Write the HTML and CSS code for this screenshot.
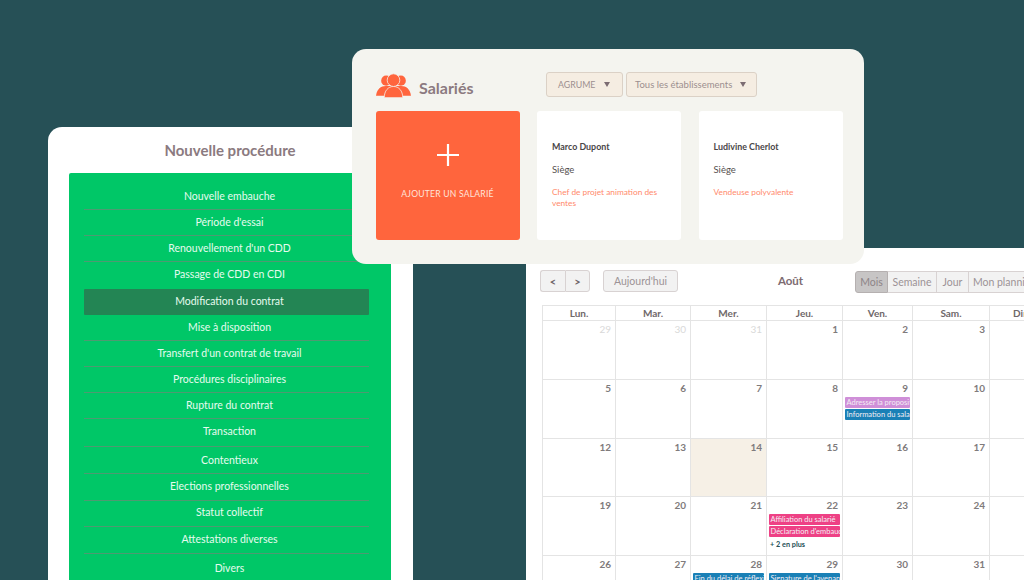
FILE: index.html
```html
<!DOCTYPE html>
<html lang="fr">
<head>
  <meta charset="utf-8" />
  <title>Salariés</title>
  <meta name="viewport" content="width=device-width, initial-scale=1" />
  <link rel="stylesheet" href="styles.css">
</head>
<body>
  <div class="canvas">

    <div class="window procedure">
      <h2 class="procedure-title">Nouvelle procédure</h2>
      <div class="menu">
        <div class="menu-item">Nouvelle embauche</div>
        <div class="menu-item">Période d'essai</div>
        <div class="menu-item">Renouvellement d'un CDD</div>
        <div class="menu-item no-line raised">Passage de CDD en CDI</div>
        <div class="menu-item active raised">Modification du contrat</div>
        <div class="menu-item">Mise à disposition</div>
        <div class="menu-item">Transfert d'un contrat de travail</div>
        <div class="menu-item">Procédures disciplinaires</div>
        <div class="menu-item">Rupture du contrat</div>
        <div class="menu-item raised">Transaction</div>
        <div class="menu-item">Contentieux</div>
        <div class="menu-item raised">Elections professionnelles</div>
        <div class="menu-item raised">Statut collectif</div>
        <div class="menu-item raised">Attestations diverses</div>
        <div class="menu-item no-line raised">Divers</div>
      </div>
    </div>

    <div class="window calendar">
      <div class="cal-toolbar">
        <div class="btn-group">
          <button class="cal-btn arrow">&lt;</button>
          <button class="cal-btn arrow">&gt;</button>
        </div>
        <button class="cal-btn today">Aujourd'hui</button>
        <div class="cal-month">Août</div>
        <div class="btn-group views">
          <button class="cal-btn view selected">Mois</button>
          <button class="cal-btn view">Semaine</button>
          <button class="cal-btn view">Jour</button>
          <button class="cal-btn view planning">Mon planning</button>
        </div>
      </div>
      <div class="cal-grid">
        <div class="cal-head">Lun.</div>
        <div class="cal-head">Mar.</div>
        <div class="cal-head">Mer.</div>
        <div class="cal-head">Jeu.</div>
        <div class="cal-head">Ven.</div>
        <div class="cal-head">Sam.</div>
        <div class="cal-head">Dim.</div>

        <div class="cal-day muted"><span class="num">29</span></div>
        <div class="cal-day muted"><span class="num">30</span></div>
        <div class="cal-day muted"><span class="num">31</span></div>
        <div class="cal-day"><span class="num">1</span></div>
        <div class="cal-day"><span class="num">2</span></div>
        <div class="cal-day"><span class="num">3</span></div>
        <div class="cal-day"><span class="num">4</span></div>

        <div class="cal-day"><span class="num">5</span></div>
        <div class="cal-day"><span class="num">6</span></div>
        <div class="cal-day"><span class="num">7</span></div>
        <div class="cal-day"><span class="num">8</span></div>
        <div class="cal-day">
          <span class="num">9</span>
          <div class="event purple">Adresser la proposition</div>
          <div class="event blue">Information du salarié</div>
        </div>
        <div class="cal-day"><span class="num">10</span></div>
        <div class="cal-day"><span class="num">11</span></div>

        <div class="cal-day"><span class="num">12</span></div>
        <div class="cal-day"><span class="num">13</span></div>
        <div class="cal-day today-cell"><span class="num">14</span></div>
        <div class="cal-day"><span class="num">15</span></div>
        <div class="cal-day"><span class="num">16</span></div>
        <div class="cal-day"><span class="num">17</span></div>
        <div class="cal-day"><span class="num">18</span></div>

        <div class="cal-day"><span class="num">19</span></div>
        <div class="cal-day"><span class="num">20</span></div>
        <div class="cal-day"><span class="num">21</span></div>
        <div class="cal-day">
          <span class="num">22</span>
          <div class="event pink">Affiliation du salarié</div>
          <div class="event pink">Déclaration d'embauche</div>
          <div class="more">+ 2 en plus</div>
        </div>
        <div class="cal-day"><span class="num">23</span></div>
        <div class="cal-day"><span class="num">24</span></div>
        <div class="cal-day"><span class="num">25</span></div>

        <div class="cal-day"><span class="num">26</span></div>
        <div class="cal-day"><span class="num">27</span></div>
        <div class="cal-day">
          <span class="num">28</span>
          <div class="event blue">Fin du délai de réflexion</div>
        </div>
        <div class="cal-day">
          <span class="num">29</span>
          <div class="event blue">Signature de l'avenant</div>
        </div>
        <div class="cal-day"><span class="num">30</span></div>
        <div class="cal-day"><span class="num">31</span></div>
        <div class="cal-day"></div>
      </div>
    </div>

    <div class="window staff">
      <div class="staff-header">
        <div class="staff-heading">
          <svg class="staff-icon" viewBox="0 0 36 25" width="35" height="25">
            <circle cx="10.5" cy="7.5" r="5.2" fill="#ff653d"/>
            <circle cx="25.5" cy="7.5" r="5.2" fill="#ff653d"/>
            <path d="M0 23 C1 16 5 13 10 13 H26 C31 13 35 16 36 23 Z" fill="#ff653d"/>
            <path d="M8.5 25 C8.5 18 12.5 13.5 18 13.5 C23.5 13.5 27.5 18 27.5 25 Z" fill="#ff653d" stroke="#f4f4ef" stroke-width=".8"/>
            <circle cx="18" cy="7" r="6.5" fill="#ff653d" stroke="#f4f4ef" stroke-width=".8"/>
          </svg>
          <h2 class="staff-title">Salariés</h2>
        </div>
        <div class="filters">
          <div class="filter company">AGRUME <span class="caret"></span></div>
          <div class="filter sites">Tous les établissements <span class="caret"></span></div>
        </div>
      </div>
      <div class="staff-cards">
        <div class="staff-card add-card">
          <svg class="plus" viewBox="0 0 24 24" width="24" height="24">
            <path d="M12 1 V23 M1 12 H23" stroke="#fff" stroke-width="2.2" fill="none"/>
          </svg>
          <div class="add-label">AJOUTER UN SALARIÉ</div>
        </div>
        <div class="staff-card person">
          <div class="person-name">Marco Dupont</div>
          <div class="person-site">Siège</div>
          <div class="person-job">Chef de projet animation des ventes</div>
        </div>
        <div class="staff-card person">
          <div class="person-name">Ludivine Cherlot</div>
          <div class="person-site">Siège</div>
          <div class="person-job">Vendeuse polyvalente</div>
        </div>
      </div>
    </div>

  </div>
</body>
</html>
```

FILE: styles.css
```css
* {
  box-sizing: border-box;
}
body {
  margin: 0;
  background: #265056;
  font-family: "Lato", "Open Sans", sans-serif;
}
.canvas {
  position: relative;
  width: 1024px;
  height: 580px;
  overflow: hidden;
  background: #265056;
}
.window {
  position: absolute;
  overflow: hidden;
}

/* left window */
.procedure {
  left: 48px;
  top: 127px;
  width: 365px;
  height: 453px;
  background: #fff;
  border-radius: 14px 14px 0 0;
  padding: 0 22px 0 21px;
}
.procedure-title {
  margin: 0;
  height: 46px;
  line-height: 46px;
  text-align: center;
  font-size: 15px;
  font-weight: 700;
  color: #8b7a80;
}
.menu {
  height: 420px;
  background: #00c767;
  border-radius: 2px;
  padding: 10px 22px 0 15px;
  display: grid;
  grid-template-rows: 27px 26px 26px 27px 26px 26px 26px 26px 26px 28px 27px 27px 26px 27px 30px;
}
.menu-item {
  display: flex;
  align-items: center;
  justify-content: center;
  padding: 0 0 1px 6px;
  font-size: 10.5px;
  color: #e6fbef;
  border-bottom: 1px solid #4e9a72;
}
.menu-item.no-line {
  border-bottom: 0;
}
.menu-item.active {
  background: #238554;
  border-bottom: 0;
  border-radius: 1px;
}
.menu-item.raised {
  padding-bottom: 3px;
}

/* top window */
.staff {
  left: 352px;
  top: 49px;
  width: 512px;
  height: 215px;
  background: #f4f4ef;
  border-radius: 14px;
  padding: 23px 21px 0 23.5px;
}
.staff-header {
  display: flex;
  height: 39px;
}
.staff-heading {
  display: flex;
  align-items: center;
  gap: 8.5px;
  width: 170.5px;
  height: 26px;
}
.staff-title {
  margin: 0;
  padding-top: 5px;
  font-size: 16px;
  font-weight: 700;
  color: #8b7a80;
}
.filters {
  display: flex;
  gap: 3px;
}
.filter {
  height: 25px;
  display: flex;
  align-items: center;
  justify-content: space-between;
  background: #f5ede2;
  border: 1px solid #dbd1c6;
  border-radius: 3px;
  font-size: 9.5px;
  color: #9c8f8f;
}
.company {
  width: 77px;
  padding: 0 12px 0 11px;
  font-size: 8.8px;
}
.sites {
  width: 131px;
  padding: 0 10px 0 8px;
}
.caret {
  width: 0;
  height: 0;
  border-left: 3px solid transparent;
  border-right: 3px solid transparent;
  border-top: 5px solid #7c6c72;
}
.staff-cards {
  display: grid;
  grid-template-columns: 144px 144px 144px;
  column-gap: 17.5px;
  height: 129px;
}
.staff-card {
  border-radius: 3px;
  background: #fff;
}
.add-card {
  background: #ff653d;
  display: flex;
  flex-direction: column;
  align-items: center;
  color: #fff;
  padding-top: 32px;
}
.add-label {
  margin-top: 22px;
  font-size: 8.6px;
  letter-spacing: .2px;
  color: #ffe3da;
}
.person {
  padding: 30px 14px 0 15px;
}
.person-name {
  font-size: 8.9px;
  font-weight: 700;
  color: #4a4648;
  line-height: 12px;
}
.person-site {
  margin-top: 11px;
  font-size: 9.5px;
  color: #55504f;
  line-height: 12px;
}
.person-job {
  margin-top: 11px;
  font-size: 8.3px;
  line-height: 11px;
  color: #ff8a6b;
}

/* calendar window */
.calendar {
  left: 526px;
  top: 248px;
  width: 520px;
  height: 332px;
  background: #fff;
  padding: 22px 0 0 14px;
}
.cal-toolbar {
  display: flex;
  height: 35px;
}
.btn-group {
  display: flex;
  height: 22px;
}
.cal-btn {
  height: 22px;
  margin: 0;
  padding: 0;
  font-family: inherit;
  font-size: 10.5px;
  color: #9c9296;
  background: #f2f2f2;
  border: 1px solid #d8d2d2;
  border-radius: 3px;
}
.arrow {
  width: 25px;
  font-size: 11px;
  font-weight: 700;
  color: #6f6468;
}
.arrow:first-child {
  border-radius: 3px 0 0 3px;
  border-right: 0;
}
.arrow:last-child {
  border-radius: 0 3px 3px 0;
}
.today {
  width: 75px;
  margin-left: 13px;
}
.cal-month {
  width: 177px;
  text-align: center;
  padding: 4px 0 0 48px;
  font-size: 11.5px;
  font-weight: 700;
  color: #7d6b71;
}
.views {
  margin-top: 1px;
}
.view {
  border-radius: 0;
  border-left: 0;
}
.view:nth-child(1) {
  width: 33px;
  border-left: 1px solid #b5b0b0;
  border-radius: 3px 0 0 3px;
}
.view:nth-child(2) {
  width: 49px;
}
.view:nth-child(3) {
  width: 32px;
}
.planning {
  width: 72px;
  white-space: nowrap;
}
.view.selected {
  background: #c7c5c5;
  border-color: #b5b0b0;
  color: #8d8487;
}
.cal-grid {
  width: 516px;
  display: grid;
  grid-template-columns: 73px 75px 76px 76px 70px 77px 68px;
  grid-template-rows: 15px 59px 59px 58px 59px 59px;
  border-top: 1px solid #e4e4e4;
  border-left: 1px solid #e4e4e4;
  margin-left: 2px;
}
.cal-head {
  text-align: center;
  font-size: 10px;
  font-weight: 700;
  line-height: 14px;
  color: #6f686a;
  border-right: 1px solid #e4e4e4;
  border-bottom: 1px solid #e4e4e4;
}
.cal-day {
  min-width: 0;
  border-right: 1px solid #e4e4e4;
  border-bottom: 1px solid #e4e4e4;
  padding-top: 1.5px;
  overflow: hidden;
}
.num {
  display: block;
  height: 13px;
  margin-bottom: 2px;
  padding-right: 4px;
  text-align: right;
  font-size: 10px;
  font-weight: 700;
  line-height: 13px;
  color: #7f7b7c;
}
.muted .num {
  color: #d9d9d9;
  font-weight: 400;
}
.today-cell {
  background: #f6f0e6;
}
.event {
  height: 11px;
  margin: 0 2px 1px 1.5px;
  padding-left: 2px;
  font-size: 7.5px;
  line-height: 11px;
  white-space: nowrap;
  overflow: hidden;
  color: #f4eef4;
  border-radius: 1px;
}
.purple {
  background: #cf8fd8;
}
.blue {
  background: #1a80b6;
}
.pink {
  background: #ee4185;
}
.more {
  margin: 3px 0 0 3px;
  font-size: 7.3px;
  line-height: 10px;
  font-weight: 700;
  color: #265056;
}
```
